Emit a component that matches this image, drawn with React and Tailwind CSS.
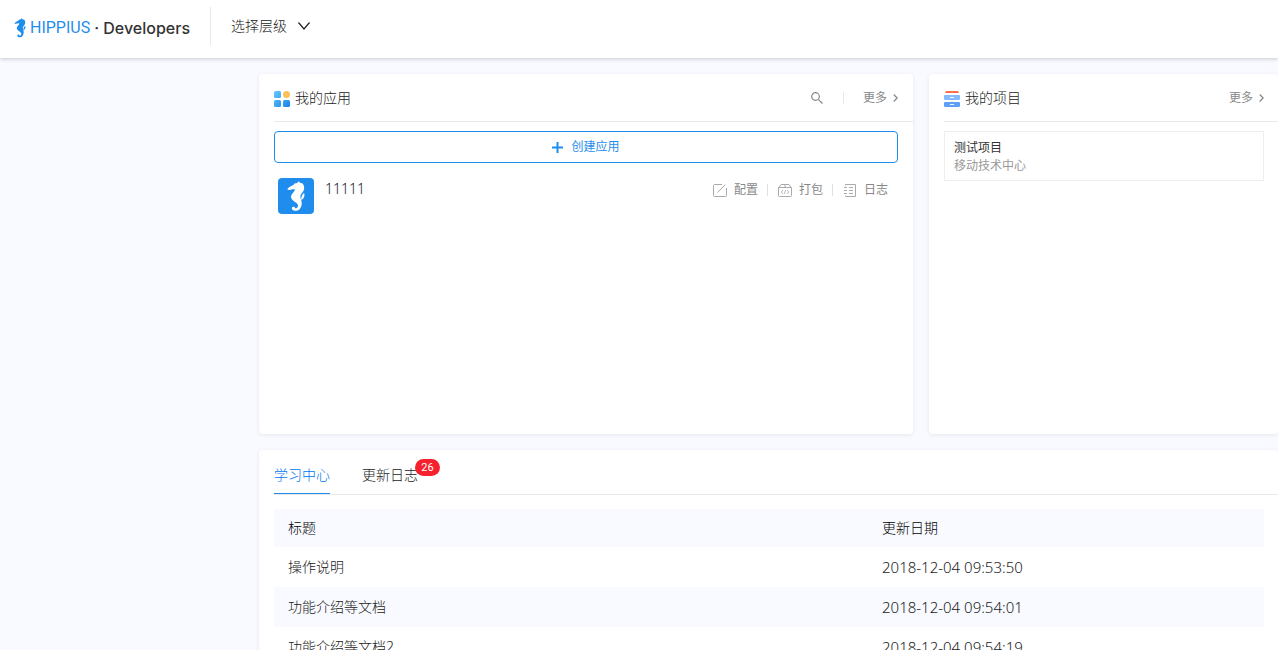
const docs = [
  { title: '操作说明', date: '2018-12-04 09:53:50' },
  { title: '功能介绍等文档', date: '2018-12-04 09:54:01' },
  { title: '功能介绍等文档2', date: '2018-12-04 09:54:19' },
]

function Seahorse({ className, viewBox }) {
  return (
    <svg className={className} viewBox={viewBox} fill="currentColor" aria-hidden="true">
      <path d="M9.3 11.5C11 8.2 15 8.4 16.5 5.6L19.3 5l1.2-1.8L22 4.8l2.6.8c2.2 2.6 2 6.4 0 8.6-2 2-2.8 4-1.8 6.8 1.5 3 1.3 7-.8 9.8-2.4 2.9-7.4 2.6-8.2-.4 0-2.2 3-2.4 3.4-.2 1.6.6 3.1-1 2.8-3.2C19 24 13.4 23 13 19c0-3.2 3.2-4.8 4-7.6-2.6-.6-4.8 1.4-7.7.1Z" />
      <path d="M26 15c1.2 2.6-.2 5.6-2.6 7.2-.6-2.7.6-5.6 2.6-7.2Z" />
    </svg>
  )
}

function AppsIcon() {
  return (
    <svg className="mt-0.5 size-4" viewBox="0 0 16 16" aria-hidden="true">
      <defs>
        <linearGradient id="apps-blue" x1="0" y1="0" x2="16" y2="16" gradientUnits="userSpaceOnUse">
          <stop stopColor="#63c8fb" />
          <stop offset="1" stopColor="#1584ea" />
        </linearGradient>
      </defs>
      <rect width="7" height="7" rx="1.5" fill="url(#apps-blue)" />
      <rect y="9" width="7" height="7" rx="1.5" fill="url(#apps-blue)" />
      <rect x="9" y="9" width="7" height="7" rx="1.5" fill="url(#apps-blue)" />
      <circle cx="12.5" cy="3.5" r="3.5" fill="#fbc058" />
    </svg>
  )
}

function ProjectIcon() {
  return (
    <svg className="mt-0.5 size-4" viewBox="0 0 16 16" aria-hidden="true">
      <path d="M1 2C1.3.6 2 0 3 0h10c1 0 1.7.6 2 2Z" fill="#ff6f4d" />
      <rect y="4" width="16" height="5" rx="1" fill="#84bbfd" />
      <rect y="11" width="16" height="5" rx="1" fill="#5e9ffa" />
      <path d="M6 6h4v1H6zM6 13h4v1H6z" fill="#fff" />
    </svg>
  )
}

function SearchIcon() {
  return (
    <svg className="size-3" viewBox="0 0 12 12" fill="none" stroke="currentColor" strokeWidth="1.2" aria-hidden="true">
      <circle cx="4.5" cy="4.5" r="3.8" />
      <path d="m7.3 7.3 4.2 4.2" />
    </svg>
  )
}

function PlusIcon() {
  return (
    <svg className="size-[11px]" viewBox="0 0 11 11" fill="currentColor" aria-hidden="true">
      <path d="M4.5 0h2v4.5H11v2H6.5V11h-2V6.5H0v-2h4.5Z" />
    </svg>
  )
}

function DownIcon() {
  return (
    <svg className="h-2 w-3" viewBox="0 0 12 8" fill="none" stroke="currentColor" strokeWidth="1.2" aria-hidden="true">
      <path d="M.5.5 6 7 11.5.5" />
    </svg>
  )
}

function EditIcon() {
  return (
    <svg className="size-[14px]" viewBox="0 0 14 14" fill="none" stroke="currentColor" aria-hidden="true">
      <path d="M9 1.5H1.5a1 1 0 0 0-1 1v10a1 1 0 0 0 1 1h11a1 1 0 0 0 1-1V5M4.5 9.5l8-8" />
    </svg>
  )
}

function PackageIcon() {
  return (
    <svg className="size-[14px]" viewBox="0 0 14 14" fill="none" stroke="currentColor" aria-hidden="true">
      <path d="M1 4.5 3 1.500h8l2 3M.5 4.500h13v8a1 1 0 0 1-1 1h-11a1 1 0 0 1-1-1ZM7 1.500v3" />
      <path d="M5 7 3.2 9 5 11M9 7l1.8 2L9 11M7.6 7l-1.2 4" strokeWidth=".8" />
    </svg>
  )
}

function LogIcon() {
  return (
    <svg className="size-[14px]" viewBox="0 0 14 14" fill="none" stroke="currentColor" aria-hidden="true">
      <path d="M2.5 2.5v-1h10v12h-10v-1M1 4.500h3M1 7.500h3M1 10.500h3M6 4.500h4M6 7.500h4M6 10.500h4" />
    </svg>
  )
}

const actions = [
  { label: '配置', Icon: EditIcon },
  { label: '打包', Icon: PackageIcon },
  { label: '日志', Icon: LogIcon },
]

function MoreLink() {
  return (
    <a href="#more" className="flex items-center gap-1.5 text-xs font-normal text-[#888]">
      更多
      <svg className="h-2 w-[5px]" viewBox="0 0 5 8" fill="none" stroke="currentColor" strokeWidth="1.3" aria-hidden="true">
        <path d="M.7.5 4.200 4 .7 7.500" />
      </svg>
    </a>
  )
}

export default function App() {
  return (
    <div className="flex h-screen flex-col overflow-hidden bg-[#f8faff] font-['Noto_Sans','Noto_Sans_CJK_SC',sans-serif] text-sm font-light text-[#222]">
      <header className="relative flex h-[58px] shrink-0 items-center bg-white pb-1.5 pl-3.5 shadow-[0_1px_4px_rgba(0,0,0,0.2)]">
        <a href="#home" className="flex h-[38px] items-center pt-1 text-[#1f8ded]">
          <Seahorse className="h-5 w-3" viewBox="9 3 18 31" />
          <span className="ml-1 font-[Roboto] text-base font-normal">HIPPIUS</span>
          <span className="ml-1 font-[Inter] text-base font-medium text-[#333]">· Developers</span>
        </a>
        <button className="ml-5 flex h-[38px] items-center gap-[11px] border-l border-[#e8e8e8] pl-5 text-[#222]">
          选择层级
          <DownIcon />
        </button>
      </header>

      <main className="ml-[259px] mt-4 flex flex-col gap-4">
        <div className="grid h-[360px] grid-cols-[minmax(0,1fr)_349px] gap-4">
          <section className="rounded bg-white pl-[15px] shadow-[0_1px_4px_rgba(0,0,0,0.08)]">
            <div className="flex h-12 items-center border-b border-[#e8e8e8] pr-[15px]">
              <AppsIcon />
              <h2 className="ml-[5px] font-light">我的应用</h2>
              <button aria-label="搜索" className="ml-auto text-[#888]"><SearchIcon /></button>
              <span className="ml-5 mr-[19px] h-3 w-px bg-[#e8e8e8]" />
              <MoreLink />
            </div>
            <div className="mt-[9px] pr-[15px]">
              <button className="flex h-8 w-full items-center justify-center gap-2 rounded border border-[#1f8ded] text-xs font-normal text-[#1f8ded]">
                <PlusIcon />
                创建应用
              </button>
              <div className="mt-[15px] flex pl-1">
                <span className="flex size-9 rounded bg-[#1f8ded] text-white">
                  <Seahorse className="size-9" viewBox="0 0 36 36" />
                </span>
                <span className="ml-[11px] leading-[22px]">11111</span>
                <div className="ml-auto mr-2.5 flex h-6 items-center divide-x divide-[#e0e0e0] text-xs font-normal text-[#888]">
                  {actions.map(({ label, Icon }) => (
                    <button key={label} className="flex h-3 items-center gap-[7px] pl-2.5 pr-[9px] last:pr-0">
                      <span className="text-[#aaa]"><Icon /></span>
                      {label}
                    </button>
                  ))}
                </div>
              </div>
            </div>
          </section>

          <section className="rounded bg-white pl-[15px] shadow-[0_1px_4px_rgba(0,0,0,0.08)]">
            <div className="flex h-12 items-center border-b border-[#e8e8e8] pr-3.5">
              <ProjectIcon />
              <h2 className="ml-[5px] mr-auto font-light">我的项目</h2>
              <MoreLink />
            </div>
            <a href="#project" className="mr-3.5 mt-[9px] block border border-[#eee] px-[9px] pb-[5px] pt-[7px] text-xs leading-[18px] font-normal">
              <p className="text-[#333]">测试项目</p>
              <p className="text-[#999]">移动技术中心</p>
            </a>
          </section>
        </div>

        <section className="rounded bg-white pl-[15px] shadow-[0_1px_4px_rgba(0,0,0,0.08)]">
          <div role="tablist" className="flex h-[45px] gap-8 border-b border-[#e8e8e8]">
            <button role="tab" aria-selected="true" className="border-b border-[#1f8ded] pt-1.5 text-[#0078f0]">学习中心</button>
            <button role="tab" aria-selected="false" className="relative pt-1.5">
              更新日志
              <span className="absolute -right-[22px] top-[9px] h-[17px] w-[25px] rounded-full bg-[#f5222d] text-center font-[Roboto] text-[11px] leading-[17px] font-normal text-white">26</span>
            </button>
          </div>
          <div className="mt-3.5 pr-3.5">
            <table className="w-full table-fixed text-left">
              <thead>
                <tr className="h-[38px] bg-[#f8faff] text-black">
                  <th className="w-3/5 px-3.5 font-light">标题</th>
                  <th className="px-3.5 font-light">更新日期</th>
                </tr>
              </thead>
              <tbody>
                {docs.map((d) => (
                  <tr key={d.title} className="h-10 even:bg-[#f8faff]">
                    <td className="px-3.5">{d.title}</td>
                    <td className="px-3.5 text-[15px] leading-5">{d.date}</td>
                  </tr>
                ))}
              </tbody>
            </table>
          </div>
        </section>
      </main>
    </div>
  )
}
